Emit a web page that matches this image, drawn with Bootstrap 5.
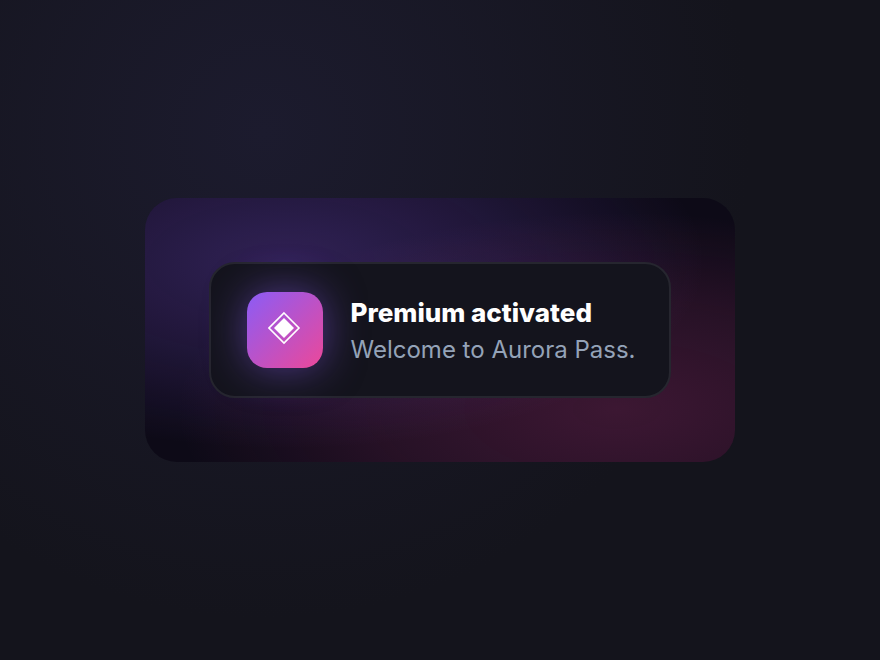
<!DOCTYPE html>
<html lang="en">
<head>
<meta charset="utf-8">
<meta name="viewport" content="width=device-width, initial-scale=1">
<title>Aurora Pass</title>
<link href="https://cdn.jsdelivr.net/npm/bootstrap@5.3.0/dist/css/bootstrap.min.css" rel="stylesheet">
<style>
body {
  font-family: Inter, "Liberation Sans", sans-serif;
  background: radial-gradient(circle at 30% 20%, #1c1b2e, #14141c 60%);
}
.aurora {
  padding: 64px;
  border-radius: 32px;
  background:
    radial-gradient(ellipse at 24% 24%, rgba(139, 92, 246, .28), rgba(139, 92, 246, .15) 34%, transparent 66%),
    radial-gradient(ellipse at 80% 80%, rgba(236, 72, 153, .21), rgba(236, 72, 153, .12) 34%, transparent 66%),
    #0d0a17;
}
.pass-toast {
  gap: 28px;
  padding: 28px 34px 28px 36px;
  border: 2px solid #26262f;
  border-radius: 26px;
  background: #14141d;
}
.pass-tile {
  width: 76px;
  height: 76px;
  border-radius: 20px;
  background: linear-gradient(135deg, #8b5cf6, #ec4899);
  box-shadow: 0 0 40px rgba(139, 92, 246, .5);
}
.pass-title { font-size: 26px; line-height: 34px; font-weight: 800; }
.pass-text { font-size: 24px; line-height: 28px; margin-top: 6px; color: #94a3b8; }
</style>
</head>
<body class="min-vh-100 d-flex align-items-center justify-content-center">
<main class="aurora">
  <div class="pass-toast d-flex align-items-center" role="status">
    <div class="pass-tile d-flex align-items-center justify-content-center flex-shrink-0">
      <svg width="34" height="40" viewBox="0 0 34 40" aria-hidden="true">
        <path d="M16 3 31 18 16 33 1 18Z" fill="none" stroke="#fff" stroke-width="1.6"/>
        <path d="M16 8 26 18 16 28 6 18Z" fill="#fff"/>
      </svg>
    </div>
    <div>
      <h1 class="pass-title text-white mb-0">Premium activated</h1>
      <p class="pass-text mb-0">Welcome to Aurora Pass.</p>
    </div>
  </div>
</main>
<script src="https://cdn.jsdelivr.net/npm/bootstrap@5.3.0/dist/js/bootstrap.bundle.min.js"></script>
</body>
</html>
